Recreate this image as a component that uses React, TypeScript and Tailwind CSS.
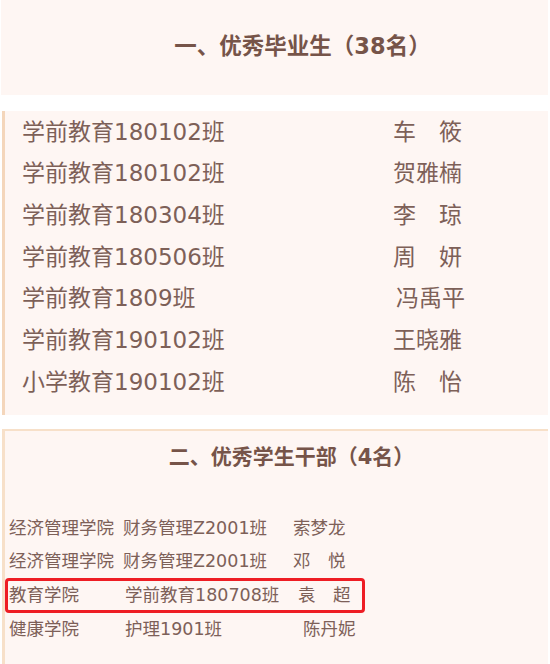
const graduates = [
  { cls: "学前教育180102班", name: "车　筱", shift: "" },
  { cls: "学前教育180102班", name: "贺雅楠", shift: "" },
  { cls: "学前教育180304班", name: "李　琼", shift: "" },
  { cls: "学前教育180506班", name: "周　妍", shift: "" },
  { cls: "学前教育1809班", name: "冯禹平", shift: "ml-[3px]" },
  { cls: "学前教育190102班", name: "王晓雅", shift: "" },
  { cls: "小学教育190102班", name: "陈　怡", shift: "" },
];

const cadres = [
  { college: "经济管理学院", cls: "财务管理Z2001班", name: "索梦龙", colW: "w-[114px]", nameW: "w-[170px]", mark: false },
  { college: "经济管理学院", cls: "财务管理Z2001班", name: "邓　悦", colW: "w-[114px]", nameW: "w-[170px]", mark: false },
  { college: "教育学院", cls: "学前教育180708班", name: "袁　超", colW: "w-[116px]", nameW: "w-[173px]", mark: true },
  { college: "健康学院", cls: "护理1901班", name: "陈丹妮", colW: "w-[116px]", nameW: "w-[178px]", mark: false },
];

export default function App() {
  return (
    <div className="w-[550px] h-[664px] overflow-hidden bg-white text-[#7d6058] font-['DejaVu_Sans','Noto_Sans_CJK_SC',sans-serif]">
      {/* Section 1 title */}
      <div className="mx-[1px] w-[547px] h-[95px] bg-[#fef6f3] flex items-center justify-center pl-[56px] pb-[2px]">
        <h2 className="text-[22.5px] font-bold text-[#765449]">一、优秀毕业生（38名）</h2>
      </div>

      {/* Graduates list */}
      <div className="mt-[16px] ml-[2px] w-[546px] bg-[#fef6f3] border-l-[3px] border-[#f4d6bb] pl-[17px] pb-[12px]">
        {graduates.map((g, i) => (
          <div key={i} className="h-[41.7px] flex items-center text-[23px]">
            <span className="w-[371px] shrink-0 whitespace-nowrap">{g.cls}</span>
            <span className={`whitespace-nowrap ${g.shift}`}>{g.name}</span>
          </div>
        ))}
      </div>

      {/* Section 2 */}
      <div className="mt-[14px] ml-[2px] w-[546px] h-[260px] bg-[#fef6f3] border-l-[3px] border-t-2 border-[#f7e0c9]">
        <div className="h-[53px] flex items-center justify-center pl-[30px]">
          <h2 className="text-[21px] font-bold text-[#765449]">二、优秀学生干部（4名）</h2>
        </div>
        <div className="mt-[28px] text-[17.5px]">
          {cadres.map((c, i) => (
            <div
              key={i}
              className={`w-[360px] flex items-center pl-[1px] rounded-[4px] ${
                c.mark ? "h-[35px] border-[3px] border-[#ee1d24]" : "h-[33px] border-2 border-transparent pl-[2px]"
              }`}
            >
              <span className={`${c.colW} shrink-0 whitespace-nowrap`}>{c.college}</span>
              <span className={`${c.nameW} shrink-0 whitespace-nowrap`}>{c.cls}</span>
              <span className="whitespace-nowrap">{c.name}</span>
            </div>
          ))}
        </div>
      </div>
    </div>
  );
}
